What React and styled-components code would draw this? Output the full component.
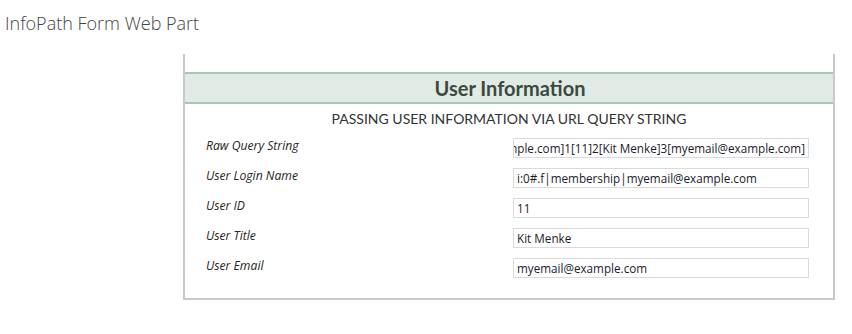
import React from 'react'
import styled, { createGlobalStyle } from 'styled-components'

const Global = createGlobalStyle`
  html, body {
    margin: 0;
    padding: 0;
    background: #fff;
  }
  body {
    font-family: "Open Sans", "Liberation Sans", sans-serif;
  }
`

const Page = styled.div`
  width: 852px;
  height: 334px;
  overflow: hidden;
`

const PartTitle = styled.h2`
  margin: 0;
  padding: 11px 0 0 5px;
  height: 54px;
  box-sizing: border-box;
  font-family: "Open Sans", sans-serif;
  font-weight: 300;
  font-size: 18px;
  line-height: 25px;
  color: #444;
`

const Frame = styled.div`
  margin-left: 183px;
  width: 652px;
  box-sizing: border-box;
  border: 2px solid #c9c9c9;
  border-top: none;
  padding-top: 18px;
  padding-bottom: 20px;
`

const Band = styled.div`
  background: #e1eae4;
  border-top: 2px solid #a8c6b3;
  border-bottom: 2px solid #a8c6b3;
  height: 28px;
  display: flex;
  align-items: center;
  justify-content: center;
`

const BandTitle = styled.span`
  font-family: Lato, "Open Sans", sans-serif;
  font-weight: 700;
  font-size: 20px;
  color: #3a4a3f;
  padding-left: 2px;
`

const SubTitle = styled.div`
  text-align: center;
  font-family: Lato, "Open Sans", sans-serif;
  font-size: 14px;
  color: #333;
  margin-top: 5px;
  height: 24px;
  line-height: 20px;
`

const Rows = styled.div`
  display: grid;
  grid-template-columns: 307px 296px;
  row-gap: 10px;
  padding-left: 21px;
  margin-top: 5px;
`

const Label = styled.div`
  font-family: "Open Sans", sans-serif;
  font-style: italic;
  font-size: 12.2px;
  color: #262626;
  line-height: 16px;
`

const Field = styled.div`
  height: 20px;
  box-sizing: border-box;
  border: 1px solid #dadada;
  display: flex;
  align-items: center;
  justify-content: ${p => (p.$end ? 'flex-end' : 'flex-start')};
  padding: 0 3px;
  overflow: hidden;
  white-space: nowrap;
  font-family: "Open Sans", sans-serif;
  font-size: 11.7px;
  color: #1b1b2b;
`

const rows = [
  ['Raw Query String', '0[i:0#.f|membership|myemail@example.com]1[11]2[Kit Menke]3[myemail@example.com]', true],
  ['User Login Name', 'i:0#.f|membership|myemail@example.com'],
  ['User ID', '11'],
  ['User Title', 'Kit Menke'],
  ['User Email', 'myemail@example.com'],
]

export default function App() {
  return (
    <Page>
      <Global />
      <PartTitle>InfoPath Form Web Part</PartTitle>
      <Frame>
        <Band>
          <BandTitle>User Information</BandTitle>
        </Band>
        <SubTitle>PASSING USER INFORMATION VIA URL QUERY STRING</SubTitle>
        <Rows>
          {rows.map(([label, value, end]) => (
            <React.Fragment key={label}>
              <Label>{label}</Label>
              <Field $end={end}>{value}</Field>
            </React.Fragment>
          ))}
        </Rows>
      </Frame>
    </Page>
  )
}
